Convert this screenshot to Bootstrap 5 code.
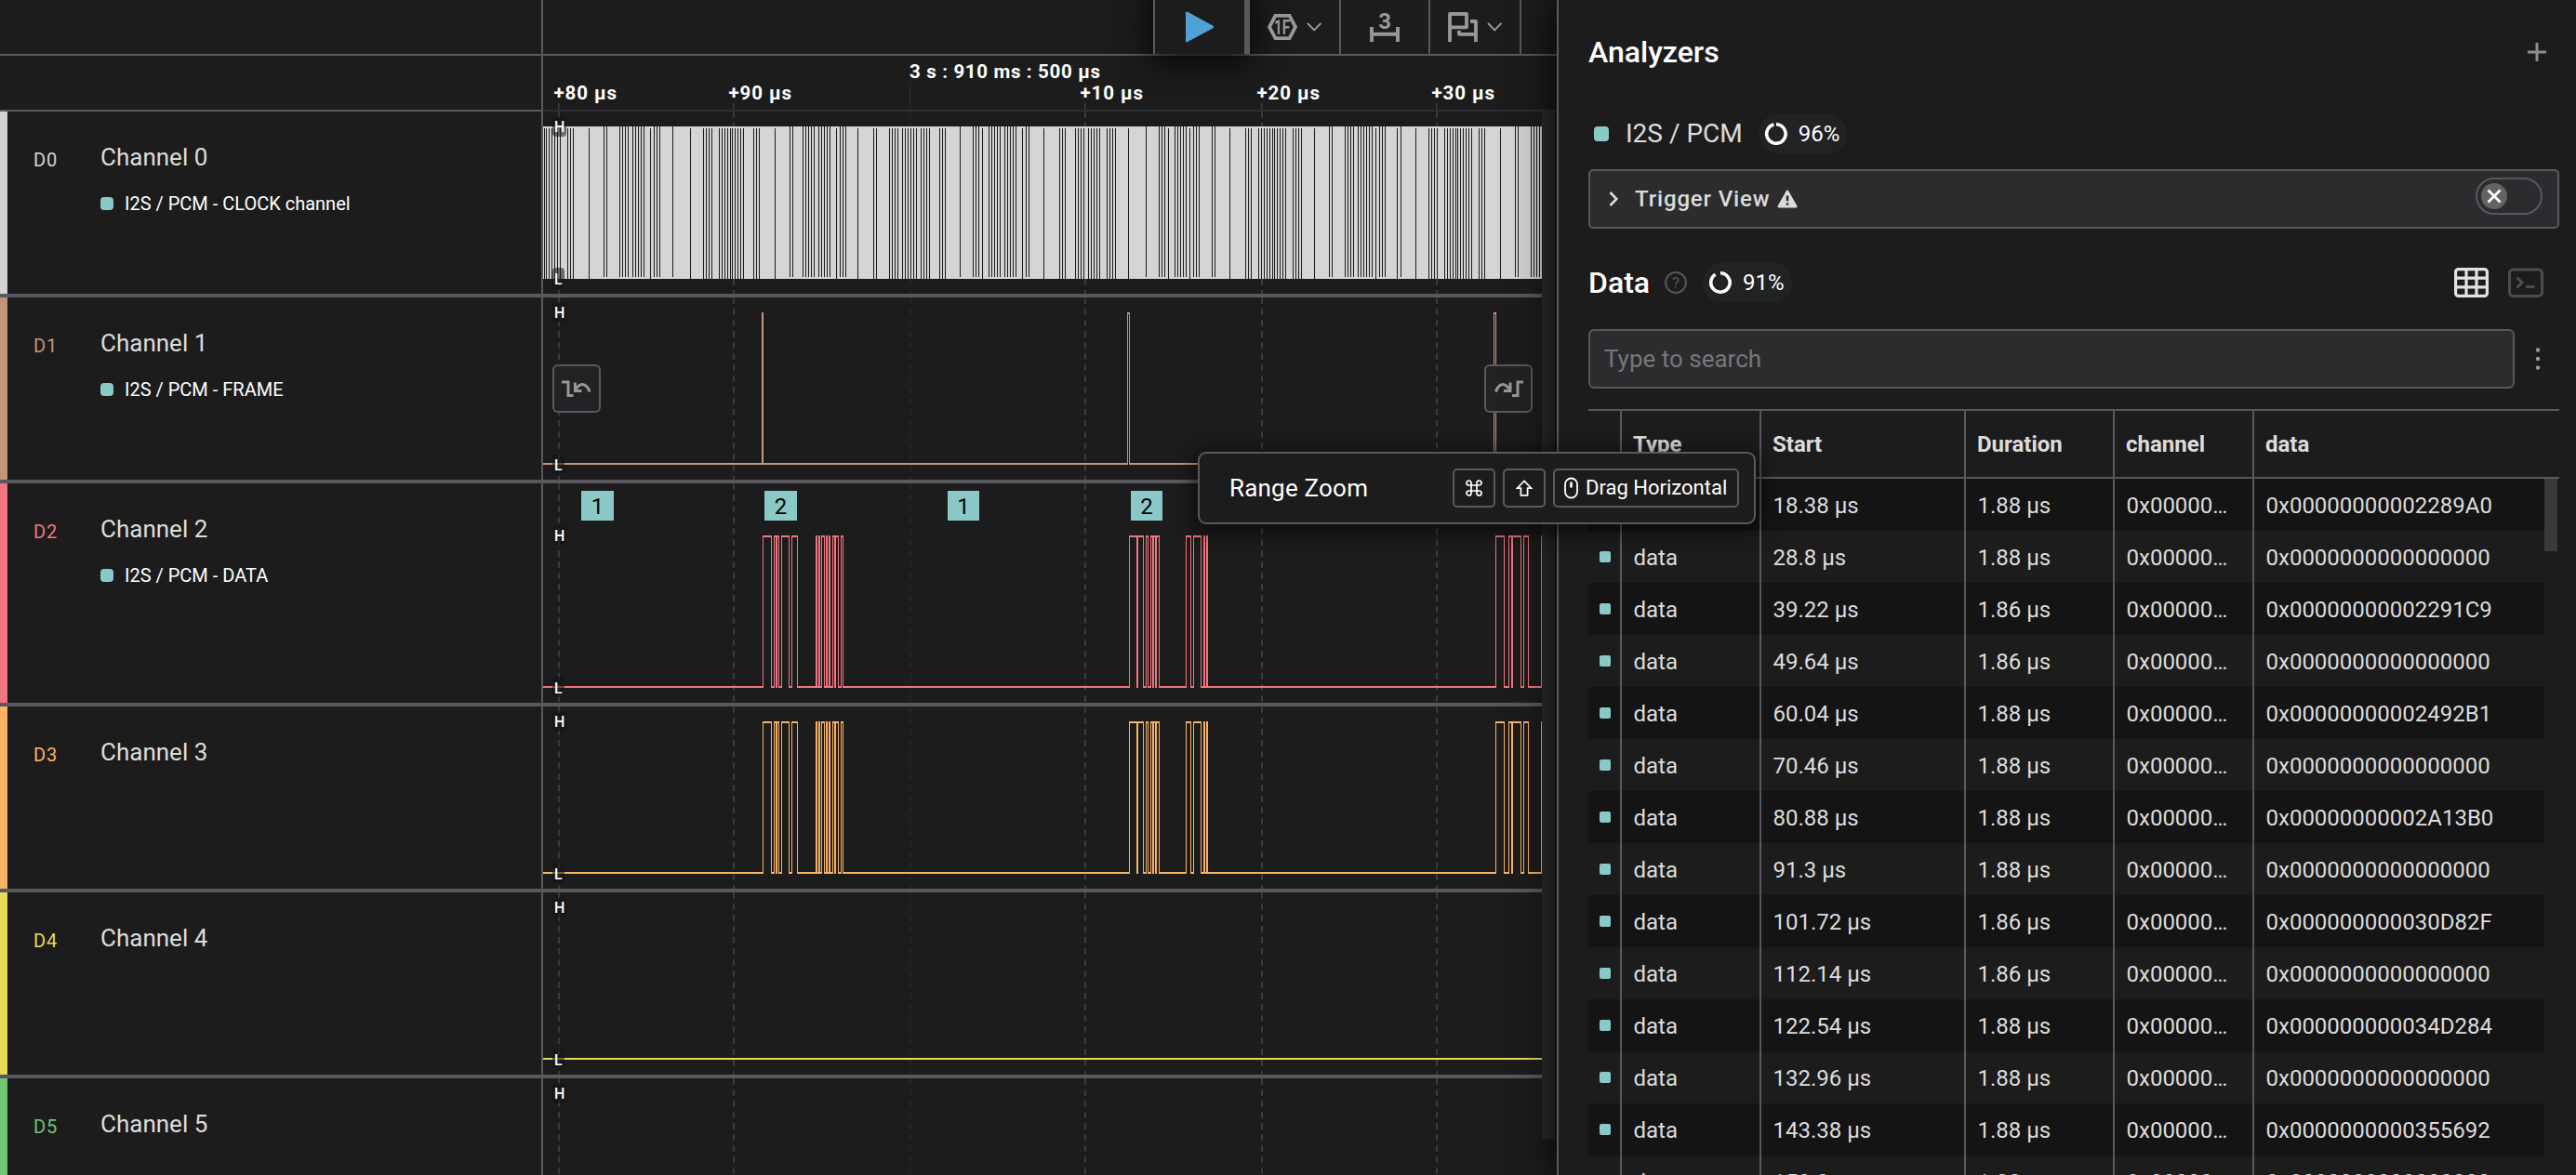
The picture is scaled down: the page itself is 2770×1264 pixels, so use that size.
<!DOCTYPE html>
<html lang="en" data-bs-theme="dark">
<head>
    <meta charset="UTF-8">
    <title>Logic Analyzer</title>
    <meta name="viewport" content="width=device-width, initial-scale=1">
    <link href="https://cdn.jsdelivr.net/npm/bootstrap@5.3.3/dist/css/bootstrap.min.css" rel="stylesheet">
    <style>
    :root {
        --bg: #1c1c1c;
        --line: #59585f;
        --text: #dcdcdc;
        --teal: #8bc8c8;
    }
    html, body { height: 100%; }
    body {
        background: var(--bg);
        color: var(--text);
        font-family: Roboto, "Liberation Sans", sans-serif;
        font-size: 24px;
        line-height: 30px;
        overflow: hidden;
    }
    svg { display: block; flex-shrink: 0; }
    svg text { font-family: Roboto, "Liberation Sans", sans-serif; }

    /* capture area */
    .capture { width: 1674px; }
    .side-cell { width: 584px; border-right: 2px solid var(--line); flex-shrink: 0; }
    .top-strip { height: 60px; border-bottom: 2px solid var(--line); position: relative; z-index: 1; }
    .tool-group { padding-right: 38px; }
    .tool-btn {
        height: 58px;
        background: var(--bg);
        border: 0;
        border-right: 2px solid var(--line);
        border-radius: 0;
        padding: 0;
    }
    .tool-play {
        width: 104px;
        border-left: 2px solid var(--line);
        border-right: 6px solid var(--line);
        position: relative;
    }
    .play-glow { position: relative; }
    .play-glow::before {
        content: "";
        position: absolute;
        inset: 0 8px 2px 8px;
        box-shadow: 0 0 36px 10px rgba(0, 0, 0, .85);
    }
    .w-trig { width: 98px; background: transparent; }
    .w-meas { width: 96px; }
    .w-note { width: 98px; }
    .axis-strip { height: 60px; }
    .axis-strip .side-cell { border-bottom: 2px solid var(--line); }
    .axis-track { border-bottom: 2px solid #2e2d33; }
    .lane { height: 200px; border-bottom: 4px solid var(--line); }
    .lane.tall { height: 240px; }
    .lane:last-child { height: 104px; border-bottom: 0; overflow: hidden; }
    .lane-bar { width: 8px; flex-shrink: 0; }
    .lane-id { width: 100px; padding: 40px 0 0 28px; font-size: 20px; line-height: 24px; letter-spacing: .8px; flex-shrink: 0; }
    .lane-name { font-size: 26px; line-height: 30px; padding-top: 34px; }
    .lane-tag { margin-top: 23px; font-size: 20px; line-height: 24px; gap: 12px; color: #fff; }
    .dot { background: var(--teal); flex-shrink: 0; width: 14px; height: 14px; border-radius: 4px; }
    .dot-lg { width: 16px; height: 16px; }
    .dot-sm { width: 12px; height: 12px; border-radius: 2px; }
    .lanes { width: 1658px; overflow: hidden; flex-shrink: 0; }
    .vscroll { width: 14px; height: 1105px; background: #2b2b2b; }
    .wave-cell { position: relative; }
    .jump-btn {
        position: absolute;
        top: 72px;
        width: 52px;
        height: 52px;
        padding: 0;
        border: 2px solid var(--line);
        border-radius: 6px;
        background: #212224;
    }
    .jump-prev { left: 10px; }
    .jump-next { right: 10px; }

    /* side panel */
    .panel {
        width: 1096px;
        background: var(--bg);
        border-left: 2px solid var(--line);
        padding: 0 18px 0 32px;
        box-shadow: 0 0 40px 4px rgba(0, 0, 0, .75);
        position: relative;
        z-index: 2;
    }
    .panel-title { font-size: 32px; line-height: 36px; font-weight: 500; margin: 0; }
    .panel-head { height: 112px; padding-right: 12px; }
    .analyzer-row { height: 44px; margin-top: 10px; padding-left: 6px; }
    .analyzer-name { font-size: 28px; margin-left: 18px; margin-right: 17px; }
    .pct-pill { height: 44px; border-radius: 22px; background: #202224; color: #fff; padding: 0 8px 0 6px; gap: 11px; }
    .trigger-box {
        height: 64px;
        margin-top: 16px;
        background: #2c2c2e;
        border: 2px solid var(--line);
        border-radius: 5px;
        padding: 0 16px 0 20px;
    }
    .trigger-name { font-weight: 500; letter-spacing: .85px; margin-left: 18px; margin-right: 8px; }
    .off-switch { width: 72px; height: 40px; border: 2px solid var(--line); border-radius: 20px; padding-left: 4px; margin-bottom: 6px; }
    .off-knob { width: 28px; height: 28px; border-radius: 50%; background: #636363; }
    .data-row { height: 44px; margin-top: 36px; padding-right: 17px; }
    .data-help { margin: 0 17px 0 16px; }
    .view-toggle { gap: 21px; }
    .search-row { margin-top: 28px; gap: 20px; }
    .search-input, .search-input:focus {
        width: 996px;
        height: 64px;
        padding: 0 15px;
        font-size: 26px;
        background: #2c2c2e;
        border: 2px solid var(--line);
        border-radius: 6px;
    }
    .search-input::placeholder { color: #77777a; opacity: 1; }
    .data-table { margin-top: 22px; border-top: 2px solid var(--line); }
    .data-head { height: 73px; border-bottom: 2px solid var(--line); font-weight: 700; }
    .data-body { height: 749px; overflow: hidden; }
    .data-line { height: 56px; width: 1028px; }
    .data-line:nth-child(odd) { background: #141414; }
    .cell { border-right: 2px solid var(--line); padding-left: 12px; display: flex; align-items: center; flex-shrink: 0; }
    .cell:last-child { border-right: 0; }
    .data-line .cell:not(.c-dot) { padding-left: 12.5px; padding-top: 1px; }
    .c-dot { width: 36px; }
    .c-type { width: 150px; }
    .c-start { width: 220px; }
    .c-dur { width: 160px; }
    .c-chan { width: 150px; }
    .table-scroll { width: 14px; height: 78px; background: #3a3a3a; }

    /* floating hint */
    .hint {
        position: absolute;
        left: 1288px;
        top: 486px;
        width: 600px;
        height: 78px;
        z-index: 3;
        background: var(--bg);
        border: 2px solid var(--line);
        border-radius: 9px;
        box-shadow: 0 4px 22px 2px rgba(0, 0, 0, .7);
        padding: 0 16px 0 32px;
        color: #fff;
    }
    .hint-text { font-size: 26px; letter-spacing: .2px; }
    .key { height: 42px; min-width: 46px; border: 2px solid var(--line); border-radius: 5px; font-size: 22px; }
    .key-drag { padding: 0 10px; gap: 8px; width: 200px; }
    </style>
</head>
<body>
<div class="d-flex h-100 overflow-hidden">
    <div class="capture flex-shrink-0 d-flex flex-column">
        <div class="top-strip d-flex flex-shrink-0">
            <div class="side-cell"></div>
            <div class="tool-group d-flex justify-content-end flex-grow-1">
                <div class="play-glow">
                    <button class="btn tool-btn tool-play d-flex align-items-center justify-content-center" aria-label="Start">
                        <svg width="30" height="34" viewBox="0 0 30 34"><path d="M0 2Q0 0 2 .8L29 15.4Q31 17 29 18.4L2 33Q0 34 0 32Z" fill="#4fa1d8"/></svg>
                    </button>
                </div>
                <button class="btn tool-btn w-trig d-flex align-items-center justify-content-center position-relative" aria-label="Trigger">
                    <svg width="58" height="34" viewBox="1363 11 58 34" fill="none" stroke="#989898">
                        <path d="M1371.4 15.8H1386.6L1393 28L1386.6 40.2H1371.4L1365 28Z" stroke-width="3.8"/>
                        <text x="1370" y="36" font-size="22" font-weight="700" fill="#989898" stroke="none" textLength="17" lengthAdjust="spacingAndGlyphs">1F</text>
                        <path d="M1406 24L1413.2 31.4L1420.4 24" stroke-width="2"/>
                    </svg>
                </button>
                <button class="btn tool-btn w-meas d-flex align-items-center justify-content-center" aria-label="Measure">
                    <svg width="32" height="34" viewBox="1473 11 32 34">
                        <text x="1482.200" y="30" font-size="24" font-weight="700" fill="#989898">3</text>
                        <path d="M1475 28V44M1503 28V44M1475 35.800H1503" stroke="#989898" stroke-width="3.900" fill="none"/>
                    </svg>
                </button>
                <button class="btn tool-btn w-note d-flex align-items-center justify-content-center" aria-label="Annotate">
                    <svg width="58" height="34" viewBox="1557 11 58 34" fill="none" stroke="#989898">
                        <path d="M1559 44V14H1577V28.3H1559M1581 22H1587V44M1587 35.8H1569V32" stroke-width="3.8" stroke-linejoin="round"/>
                        <path d="M1600 24L1607.2 31.4L1614.4 24" stroke-width="2"/>
                    </svg>
                </button>
            </div>
        </div>
        <div class="axis-strip d-flex flex-shrink-0">
            <div class="side-cell"></div>
            <div class="axis-track flex-grow-1"><svg id="axis" width="1090" height="58" viewBox="584 60 1090 58"></svg></div>
        </div>
        <div class="d-flex">
            <div id="lanes" class="lanes"></div>
            <div class="vscroll"></div>
        </div>
    </div>

    <div class="panel flex-shrink-0">
        <div class="panel-head d-flex align-items-center justify-content-between">
            <h1 class="panel-title">Analyzers</h1>
            <svg width="24" height="24" viewBox="0 0 24 24"><path d="M12 2V22M2 12H22" stroke="#8e8e8e" stroke-width="3" fill="none"/></svg>
        </div>
        <div class="analyzer-row d-flex align-items-center">
            <span class="dot dot-lg"></span>
            <span class="analyzer-name">I2S / PCM</span>
            <span class="pct-pill d-flex align-items-center">
                <svg width="26" height="26" viewBox="0 0 26 26"><path d="M13 2.8A10.2 10.2 0 1 1 10.4 3.1" stroke="#fff" stroke-width="3.6" fill="none"/></svg>
                <span>96%</span>
            </span>
        </div>
        <div class="trigger-box d-flex align-items-center">
            <svg width="10" height="16" viewBox="0 0 10 16"><path d="M1.5 1L8.3 8L1.5 15" stroke="#dcdcdc" stroke-width="2.6" fill="none"/></svg>
            <span class="trigger-name">Trigger View</span>
            <svg width="22" height="20" viewBox="0 0 22 20">
                <path d="M11 .6Q11.8 .6 12.3 1.6L21.4 17.6Q22 19.4 20.4 19.4H1.6Q0 19.4 .6 17.6L9.7 1.6Q10.2 .6 11 .6Z" fill="#dcdcdc"/>
                <path d="M11 6.5V12.3M11 14.3V16.8" stroke="#2c2c2e" stroke-width="2.6"/>
            </svg>
            <div class="off-switch ms-auto d-flex align-items-center">
                <span class="off-knob d-flex align-items-center justify-content-center">
                    <svg width="16" height="16" viewBox="0 0 16 16"><path d="M1.5 1.5L14.5 14.5M14.5 1.5L1.5 14.5" stroke="#fff" stroke-width="2.8"/></svg>
                </span>
            </div>
        </div>
        <div class="data-row d-flex align-items-center">
            <h2 class="panel-title">Data</h2>
            <svg class="data-help" width="24" height="24" viewBox="0 0 24 24">
                <circle cx="12" cy="12" r="10.9" stroke="#565656" stroke-width="2" fill="none"/>
                <text x="12" y="18" font-size="17" fill="#565656" text-anchor="middle">?</text>
            </svg>
            <span class="pct-pill d-flex align-items-center">
                <svg width="26" height="26" viewBox="0 0 26 26"><path d="M13 2.8A10.2 10.2 0 1 1 7.6 4.3" stroke="#fff" stroke-width="3.6" fill="none"/></svg>
                <span>91%</span>
            </span>
            <div class="view-toggle ms-auto d-flex">
                <svg width="37" height="32" viewBox="0 0 37 32" fill="none" stroke="#e2e2e0" stroke-width="3.2">
                    <rect x="1.6" y="1.6" width="33.8" height="28.8" rx="3"/>
                    <path d="M13 2V30M24 2V30M2 11.2H35M2 20.8H35"/>
                </svg>
                <svg width="38" height="32" viewBox="0 0 38 32" fill="none" stroke="#4c4c4c" stroke-width="3">
                    <rect x="1.5" y="2" width="35" height="28.4" rx="4"/>
                    <path d="M9.5 10.5L15 16L9.5 21.5M19 20.5H28.5"/>
                </svg>
            </div>
        </div>
        <div class="search-row d-flex align-items-center">
            <input type="text" class="form-control search-input" placeholder="Type to search">
            <svg width="10" height="28" viewBox="0 0 10 28" fill="#9a9a9a">
                <circle cx="5" cy="4.5" r="2.2"/><circle cx="5" cy="14" r="2.2"/><circle cx="5" cy="23.5" r="2.2"/>
            </svg>
        </div>
        <div class="data-table">
            <div class="data-head d-flex">
                <div class="cell c-dot"></div>
                <div class="cell c-type">Type</div>
                <div class="cell c-start">Start</div>
                <div class="cell c-dur">Duration</div>
                <div class="cell c-chan">channel</div>
                <div class="cell">data</div>
            </div>
            <div class="data-body d-flex">
                <div id="dataRows"></div>
                <div class="table-scroll"></div>
            </div>
        </div>
    </div>
</div>

<div class="hint d-flex align-items-center">
    <span class="hint-text">Range Zoom</span>
    <div class="d-flex gap-2 ms-auto">
        <span class="key d-flex align-items-center justify-content-center">
            <svg width="18" height="18" viewBox="0 0 18 18" fill="none" stroke="#fff" stroke-width="1.7">
                <path d="M6 6H12V12H6ZM6 6H3.5A2.5 2.5 0 1 1 6 3.5ZM12 6V3.5A2.5 2.5 0 1 1 14.5 6ZM12 12H14.5A2.5 2.5 0 1 1 12 14.5ZM6 12V14.5A2.5 2.5 0 1 1 3.5 12Z"/>
            </svg>
        </span>
        <span class="key d-flex align-items-center justify-content-center">
            <svg width="18" height="18" viewBox="0 0 18 18" fill="none" stroke="#fff" stroke-width="1.7">
                <path d="M9 1.4L16.6 9.2H12.6V16.8H5.4V9.2H1.4Z"/>
            </svg>
        </span>
        <span class="key key-drag d-flex align-items-center">
            <svg width="15" height="24" viewBox="0 0 15 24" fill="none" stroke="#fff">
                <rect x="1" y="1.5" width="13" height="21" rx="6.5" stroke-width="1.8"/>
                <path d="M7.5 6.5V10.5" stroke-width="2.6" stroke-linecap="round"/>
            </svg>
            <span>Drag Horizontal</span>
        </span>
    </div>
</div>

<script src="https://cdn.jsdelivr.net/npm/bootstrap@5.3.3/dist/js/bootstrap.bundle.min.js"></script>
<script>
// x of every time tick, major ones are drawn fainter
const ticks = [
    { x: 600, label: '+80 µs' },
    { x: 788, label: '+90 µs' },
    { x: 978, label: '3 s : 910 ms : 500 µs', major: true },
    { x: 1166, label: '+10 µs' },
    { x: 1356, label: '+20 µs' },
    { x: 1544, label: '+30 µs' }
];

// level changes, low -> high -> low ...
const dataEdges = [
    820, 829, 832, 834, 835, 837, 840, 848, 851, 857,
    877, 878, 880, 881, 883, 886, 888, 889, 891, 892, 895, 897, 898, 901, 904, 906,
    1214, 1222, 1223, 1229, 1232, 1234, 1237, 1239, 1240, 1242, 1243, 1246,
    1275, 1280, 1283, 1291, 1294, 1295, 1297, 1298,
    1608, 1617, 1622, 1625, 1626, 1635, 1638, 1643, 1657, 1700
];

// gaps in the clock: "d" drops from the top rail, "u" stops before the bottom rail
const clockGaps = {
    d: [585, 587, 590, 593, 596, 599, 602, 610, 613, 616, 633, 699, 742, 756, 759, 762, 765,
        773, 776, 779, 782, 785, 787, 790, 793, 796, 799, 810, 813, 816, 833, 899, 922, 939, 942,
        956, 959, 962, 965, 970, 973, 976, 979, 982, 985, 990, 993, 996, 999, 1010, 1013, 1016,
        1056, 1099, 1122, 1139, 1142, 1145, 1156, 1159, 1162, 1165, 1170, 1173, 1176, 1179, 1182,
        1190, 1193, 1196, 1199, 1213, 1256, 1279, 1322, 1339, 1342, 1345, 1353, 1356, 1359, 1362,
        1365, 1368, 1370, 1373, 1376, 1379, 1382, 1390, 1393, 1396, 1399, 1413, 1479, 1502, 1522,
        1536, 1539, 1542, 1545, 1553, 1556, 1559, 1562, 1565, 1567, 1570, 1573, 1576, 1579, 1582,
        1590, 1593, 1596, 1613],
    u: [649, 652, 666, 669, 672, 675, 680, 683, 686, 689, 692, 703, 706, 709, 723, 849, 852,
        863, 866, 869, 872, 875, 880, 883, 886, 889, 892, 903, 906, 909, 1032, 1046, 1049, 1052,
        1063, 1066, 1069, 1072, 1075, 1080, 1083, 1086, 1089, 1092, 1103, 1106, 1232, 1246, 1249,
        1252, 1263, 1266, 1269, 1272, 1275, 1283, 1286, 1289, 1303, 1306, 1429, 1432, 1446, 1449,
        1452, 1455, 1460, 1463, 1466, 1469, 1472, 1475, 1483, 1486, 1489, 1506, 1629, 1632, 1646,
        1649, 1652, 1655]
};

const lanes = [
    { id: 'D0', color: '#d4d4d4', tag: 'I2S / PCM - CLOCK channel', clock: true },
    { id: 'D1', color: '#c2967a', tag: 'I2S / PCM - FRAME', edges: [819, 820, 1212, 1214, 1606, 1608], jump: true },
    { id: 'D2', color: '#f17681', tag: 'I2S / PCM - DATA', edges: dataEdges, tall: true,
      frames: [[625, 35, '1'], [822, 35, '2'], [1019, 34, '1'], [1216, 34, '2']] },
    { id: 'D3', color: '#f9b266', edges: dataEdges },
    { id: 'D4', color: '#e6db59', edges: [] },
    { id: 'D5', color: '#72c472', edges: [], cut: true }
];

function rect(x, y, w, h, fill) {
    return `<rect x="${x}" y="${y}" width="${w}" height="${h}" fill="${fill}"/>`;
}

function drawAxis() {
    document.getElementById('axis').innerHTML = ticks.map(t => {
        const y = t.major ? 84 : 107.3;
        return `<text x="${t.x + (t.major ? 0 : -4.5)}" y="${y}" font-size="20.5" font-weight="700" fill="#fff"
                      textLength="${t.major ? 205 : 67.5}">${t.label}</text>`
            + rect(t.x, t.major ? 88 : 111, 1.5, 30, t.major ? '#28282b' : '#3c3b42');
    }).join('');
}

function drawWave(lane) {
    const h = lane.tall ? 236 : lane.cut ? 104 : 196;
    const top = lane.tall ? 56 : 16;
    const low = top + 162;
    let out = ticks.map(t =>
        `<path d="M${t.x + 1} 0V${h}" stroke="${t.major ? '#252528' : '#39393e'}" stroke-width="2" stroke-dasharray="7 5"/>`
    ).join('');
    if (lane.clock) {
        out += rect(584, top, 1074, 164, lane.color);
        clockGaps.d.forEach(x => out += rect(x, top + 2, 1, 162, '#1c1c1c'));
        clockGaps.u.forEach(x => out += rect(x, top, 1, 162, '#1c1c1c'));
    } else if (!lane.cut) {
        let from = 584;
        for (let i = 0; i < lane.edges.length; i += 2) {
            const up = lane.edges[i], down = lane.edges[i + 1];
            out += rect(from, low, up - from + 1, 2, lane.color);
            out += rect(up, top, 1, 164, lane.color) + rect(down, top, 1, 164, lane.color);
            out += rect(up, top, down - up + 1, 2, lane.color);
            from = down;
        }
        out += rect(from, low, Math.max(0, 1658 - from), 2, lane.color);
    }
    (lane.frames || []).forEach(([x, w, n]) => {
        out += rect(x, 8, w, 32, '#8bc8c8')
            + `<text x="${x + w / 2}" y="32.5" font-size="24" fill="#000" text-anchor="middle">${n}</text>`;
    });
    out += `<rect x="594" y="${top - 11}" width="15" height="22" rx="4" fill="#141414" fill-opacity=".55"/>
            <text x="596" y="${top + 6}" font-size="16" font-weight="500" fill="#fff">H</text>`;
    if (!lane.cut) {
        out += `<rect x="594" y="${low - 10}" width="13" height="22" rx="4" fill="#141414" fill-opacity=".55"/>
            <text x="596" y="${low + 8}" font-size="16" font-weight="500" fill="#fff">L</text>`;
    }
    return `<svg width="1074" height="${h}" viewBox="584 0 1074 ${h}">${out}</svg>`;
}

const jumpButtons = `
    <button class="btn jump-btn jump-prev" aria-label="Previous edge">
        <svg width="48" height="48" viewBox="596 394 48 48" fill="none" stroke="#969696" stroke-width="3">
            <path d="M604 411H611V425.5H616.5M634 421.5C631 412 624 411 619 419M618.4 411.5V420.6H625.5"/>
        </svg>
    </button>
    <button class="btn jump-btn jump-next" aria-label="Next edge">
        <svg width="48" height="48" viewBox="1598 394 48 48" fill="none" stroke="#969696" stroke-width="3">
            <path d="M1626 425.5H1632V411H1638M1608.5 421.5C1611.5 412 1618 411 1623 419M1624 411.5V420.6H1617"/>
        </svg>
    </button>`;

document.getElementById('lanes').innerHTML = lanes.map((lane, i) => `
    <div class="lane d-flex ${lane.tall ? 'tall' : ''}">
        <div class="side-cell d-flex">
            <div class="lane-bar" style="background:${lane.color}"></div>
            <div class="lane-id" style="color:${lane.color}">${lane.id}</div>
            <div>
                <div class="lane-name">Channel ${i}</div>
                ${lane.tag ? `<div class="lane-tag d-flex align-items-center"><span class="dot"></span>${lane.tag}</div>` : ''}
            </div>
        </div>
        <div class="wave-cell">${drawWave(lane)}${lane.jump ? jumpButtons : ''}</div>
    </div>`).join('');

const rows = [
    ['18.38', '1.88', '00000000002289A0'],
    ['28.8', '1.88', '0000000000000000'],
    ['39.22', '1.86', '00000000002291C9'],
    ['49.64', '1.86', '0000000000000000'],
    ['60.04', '1.88', '00000000002492B1'],
    ['70.46', '1.88', '0000000000000000'],
    ['80.88', '1.88', '00000000002A13B0'],
    ['91.3', '1.88', '0000000000000000'],
    ['101.72', '1.86', '000000000030D82F'],
    ['112.14', '1.86', '0000000000000000'],
    ['122.54', '1.88', '000000000034D284'],
    ['132.96', '1.88', '0000000000000000'],
    ['143.38', '1.88', '0000000000355692'],
    ['153.8', '1.88', '0000000000000000']
];

// the first row's type is under the hint
document.getElementById('dataRows').innerHTML = rows.map(([start, duration, value], i) => `
    <div class="data-line d-flex">
        <div class="cell c-dot">${i ? '<span class="dot dot-sm"></span>' : ''}</div>
        <div class="cell c-type">${i ? 'data' : ''}</div>
        <div class="cell c-start">${start} µs</div>
        <div class="cell c-dur">${duration} µs</div>
        <div class="cell c-chan">0x00000…</div>
        <div class="cell">0x${value}</div>
    </div>`).join('');

drawAxis();
</script>
</body>
</html>
